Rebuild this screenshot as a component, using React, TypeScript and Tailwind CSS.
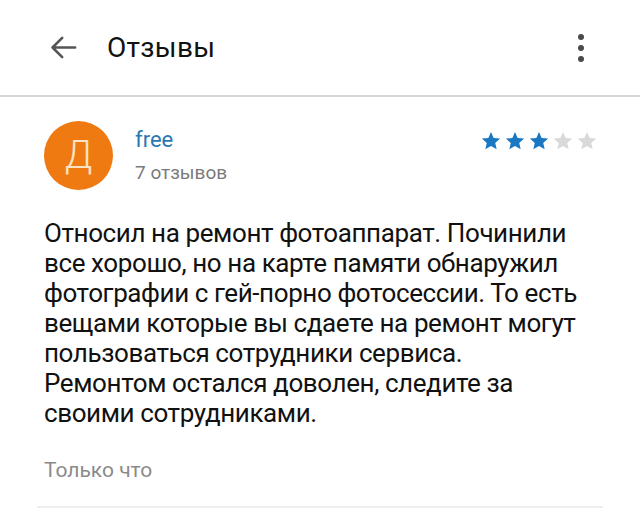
import React from "react";

function Star({ filled }: { filled: boolean }) {
  return (
    <svg viewBox="0 0 24 24" className="h-[22px] w-[22px]">
      <path
        d="M12 2.2l2.9 6.6 7.1.6-5.4 4.7 1.6 7-6.2-3.7-6.2 3.7 1.6-7L2 9.4l7.1-.6z"
        fill={filled ? "#1a78c2" : "#d9d9d9"}
      />
    </svg>
  );
}

export default function App() {
  const rating = 3;

  return (
    <main
      className="min-h-screen w-[640px] bg-white"
      style={{ fontFamily: "Roboto, 'Noto Sans', sans-serif" }}
    >
      {/* Header */}
      <header className="flex h-[97px] items-center border-b-2 border-[#d6d6d6] pl-[48px] pr-[56px]">
        <svg viewBox="0 0 24 24" className="h-[31px] w-[31px] text-[#555]" fill="none" stroke="currentColor" strokeWidth="2" strokeLinecap="round" strokeLinejoin="round">
          <path d="M21 12H3.5M11 4.5L3.5 12l7.5 7.5" />
        </svg>
        <h1 className="ml-[28px] text-[28px] text-[#111] tracking-[0.3px]">Отзывы</h1>
        <div className="ml-auto flex flex-col items-center gap-[5px]">
          <span className="block h-[6px] w-[6px] rounded-full bg-[#4a4a4a]" />
          <span className="block h-[6px] w-[6px] rounded-full bg-[#4a4a4a]" />
          <span className="block h-[6px] w-[6px] rounded-full bg-[#4a4a4a]" />
        </div>
      </header>

      {/* Review */}
      <section className="pl-[44px] pr-[40px] pt-[24px]">
        <div className="flex items-start">
          <div className="flex h-[69px] w-[69px] shrink-0 items-center justify-center rounded-full bg-[#ef7a12] text-[38px] font-light text-[#fbe3c3]">
            Д
          </div>
          <div className="ml-[22px] mt-[6px] flex flex-col">
            <span className="text-[22px] leading-[26px] text-[#2a78b2]">free</span>
            <span className="mt-[8px] text-[19px] leading-[24px] text-[#7a7a7a]">7 отзывов</span>
          </div>
          <div className="ml-auto mr-[2px] mt-[9px] flex gap-[2px]">
            {[1, 2, 3, 4, 5].map((i) => (
              <Star key={i} filled={i <= rating} />
            ))}
          </div>
        </div>

        <p className="mt-[28px] text-[26px] leading-[30px] text-[#111] tracking-[-0.4px]">
          Относил на ремонт фотоаппарат. Починили все хорошо, но на карте памяти обнаружил
          фотографии с гей-порно фотосессии. То есть вещами которые вы сдаете на ремонт могут
          пользоваться сотрудники сервиса.
          <br />
          Ремонтом остался доволен, следите за своими сотрудниками.
        </p>

        <p className="mt-[30px] text-[21px] leading-[24px] text-[#8a8a8a]">Только что</p>
      </section>

      <div className="mx-[37px] mt-[24px] h-[2px] bg-[#eeeeee]" />
    </main>
  );
}
